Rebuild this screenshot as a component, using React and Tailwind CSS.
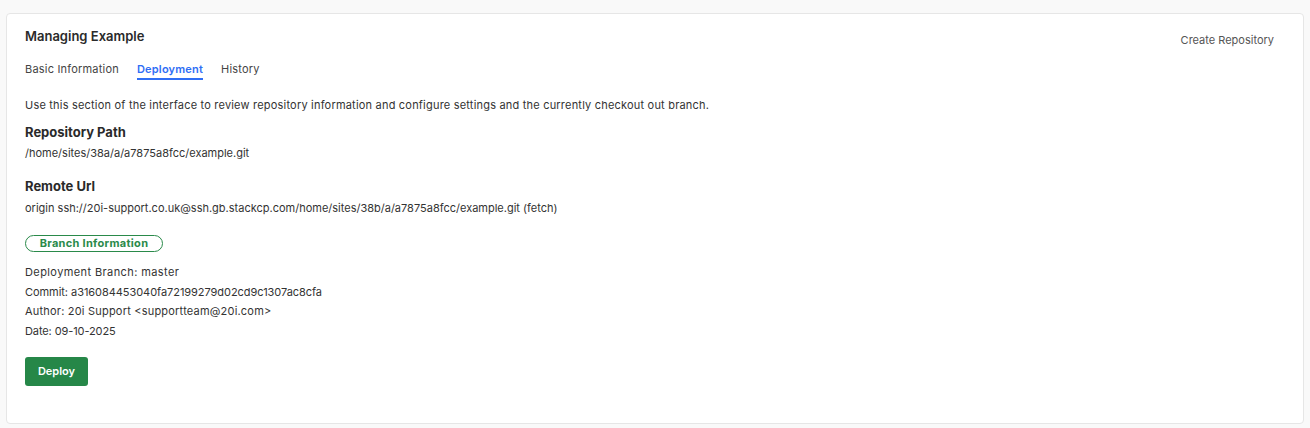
export default function App() {
  const f = { fontFamily: '"Inter", "Noto Sans", sans-serif' };
  return (
    <div className="min-h-[428px] bg-[#f9f9f9] pt-[13px] px-[6px]" style={f}>
      <div className="h-[411px] bg-white border border-[#e6e6e6] rounded-[4px] pl-[18px] pr-[29px] pt-[14px] text-[#333]">
        <div className="flex justify-between items-start">
          <div className="text-[13px] leading-[16px] font-semibold text-[#2a2a2a]">Managing Example</div>
          <div className="text-[11px] leading-[14px] mt-[5px] text-[#555]">Create Repository</div>
        </div>
        <div className="flex gap-[18px] mt-[15px] text-[11px] leading-[14px] tracking-[0.2px]">
          <div className="pb-[2px] text-[#444]">Basic Information</div>
          <div className="pb-[2px] font-semibold text-[#2f6ef5] border-b-2 border-[#2f6ef5]">Deployment</div>
          <div className="pb-[2px] text-[#444]">History</div>
        </div>
        <div className="mt-[18px] text-[11px] leading-[14px] text-[#333] tracking-[0.2px]">
          Use this section of the interface to review repository information and configure settings and the currently checkout out branch.
        </div>
        <div className="mt-[12px] text-[13px] leading-[16px] font-bold text-[#2a2a2a]">Repository Path</div>
        <div className="mt-[6px] text-[11px] leading-[14px]">/home/sites/38a/a/a7875a8fcc/example.git</div>
        <div className="mt-[18px] text-[13px] leading-[16px] font-bold text-[#2a2a2a]">Remote Url</div>
        <div className="mt-[7px] text-[11px] leading-[14px]">origin ssh://20i-support.co.uk@ssh.gb.stackcp.com/home/sites/38b/a/a7875a8fcc/example.git (fetch)</div>
        <div className="mt-[20px] flex items-center justify-center w-[138px] h-[17px] rounded-full border border-[#2a8a4a] text-[11px] font-bold text-[#2a8a4a] tracking-[0.3px]">Branch Information</div>
        <div className="mt-[11px] text-[11px] leading-[19.5px]">
          <div className="tracking-[0.4px]">Deployment Branch: master</div>
          <div className="tracking-[-0.05px]">Commit: a316084453040fa72199279d02cd9c1307ac8cfa</div>
          <div className="tracking-[0.2px]">Author: 20i Support &lt;supportteam@20i.com&gt;</div>
          <div className="tracking-[-0.1px]">Date: 09-10-2025</div>
        </div>
        <button className="mt-[16px] w-[63px] h-[29px] rounded-[3px] bg-[#268748] text-white text-[11px] font-semibold">Deploy</button>
      </div>
    </div>
  );
}
